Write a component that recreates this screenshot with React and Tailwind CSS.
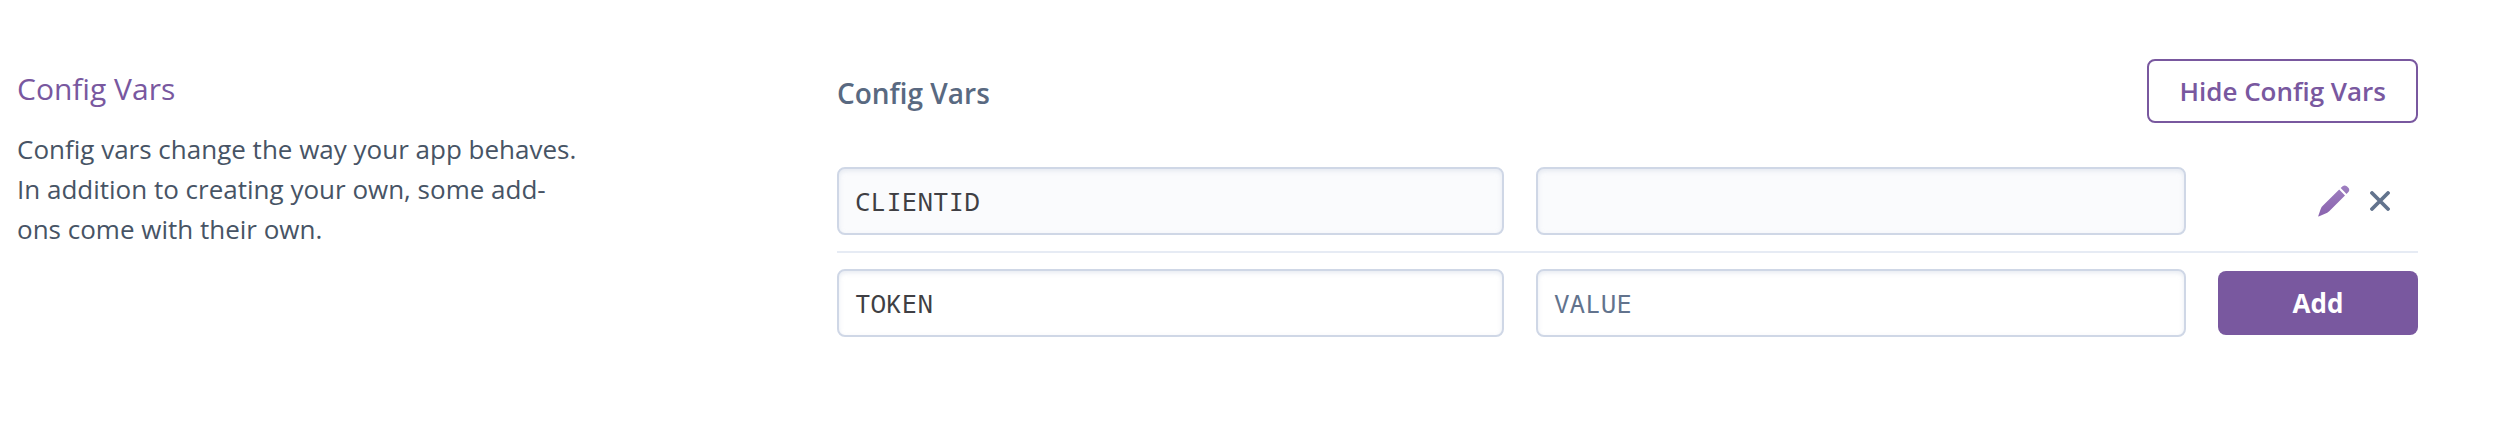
import React, { useState } from "react";

const fieldClass =
  "block h-[68px] w-full min-w-0 rounded-lg border-2 border-[#cfd7e6] px-4 font-['Noto_Sans_Mono','DejaVu_Sans_Mono',monospace] text-[26px] text-[#3f3f44] shadow-[inset_0_2px_4px_rgba(207,215,230,0.5)] outline-none placeholder:text-[#62738d] placeholder:opacity-100";

function PencilIcon() {
  return (
    <svg width="32" height="32" viewBox="0 0 32 32" aria-hidden="true">
      <defs>
        <linearGradient id="pencil" x1="0" y1="0" x2="0" y2="1">
          <stop offset="0" stopColor="#9e7fc0" />
          <stop offset="1" stopColor="#8a63ae" />
        </linearGradient>
      </defs>
      <path
        fill="url(#pencil)"
        d="M21.2 4.6 27 10.4 11.2 26.2Q9.4 28 7 28.8L.6 31.4Q.2 31.6.3 31L2.6 24.2Q3.4 22 5 20.6ZM22.7 3.1 24.6 1.2Q26.6-.4 28.8 1.2L30.6 3.1Q32 5 30.4 7L28.5 8.9Z"
      />
    </svg>
  );
}

function CloseIcon() {
  return (
    <svg width="20" height="20" viewBox="0 0 20 20" aria-hidden="true">
      <path
        d="M2 2 18 18M18 2 2 18"
        fill="none"
        stroke="#62738d"
        strokeWidth="3.8"
        strokeLinecap="round"
      />
    </svg>
  );
}

export default function App() {
  const [key, setKey] = useState("TOKEN");
  const [value, setValue] = useState("");

  return (
    <main className="grid grid-cols-[820fr_1581fr] bg-white pt-[59px] pr-[102px] pb-24 pl-[17px] font-['Open_Sans',sans-serif]">
      <section className="pt-3">
        <h2 className="text-[30px] leading-9 text-[#79589f]">Config Vars</h2>
        <p className="mt-[22px] max-w-[570px] text-[26px] leading-[40px] text-[#475465]">
          Config vars change the way your app behaves.
          <br />
          In addition to creating your own, some add-
          <br />
          ons come with their own.
        </p>
      </section>

      <section>
        <header className="flex items-center justify-between">
          <h3 className="pt-1 text-[28px] leading-9 font-semibold text-[#596981]">Config Vars</h3>
          <button
            type="button"
            className="h-16 rounded-lg border-2 border-[#79589f] px-[30px] text-[26px] font-semibold text-[#79589f]"
          >
            Hide Config Vars
          </button>
        </header>

        <div className="mt-11 grid grid-cols-[667fr_650fr_200px] items-center gap-8 border-b-2 border-[#e6ebf4] pb-4">
          <input aria-label="Key" readOnly value="CLIENTID" className={`${fieldClass} bg-[#fafbfd]`} />
          <input aria-label="Value" readOnly value="" className={`${fieldClass} bg-[#fafbfd]`} />
          <div className="flex items-center justify-end gap-5 pr-7">
            <button type="button" aria-label="Edit config var">
              <PencilIcon />
            </button>
            <button type="button" aria-label="Delete config var">
              <CloseIcon />
            </button>
          </div>
        </div>

        <form
          className="grid grid-cols-[667fr_650fr_200px] items-center gap-8 pt-4"
          onSubmit={(event) => event.preventDefault()}
        >
          <input
            aria-label="New key"
            placeholder="KEY"
            value={key}
            onChange={(event) => setKey(event.target.value)}
            className={`${fieldClass} bg-white`}
          />
          <input
            aria-label="New value"
            placeholder="VALUE"
            value={value}
            onChange={(event) => setValue(event.target.value)}
            className={`${fieldClass} bg-white`}
          />
          <button type="submit" className="h-16 rounded-lg bg-[#79589f] text-[26px] font-bold text-white">
            Add
          </button>
        </form>
      </section>
    </main>
  );
}
